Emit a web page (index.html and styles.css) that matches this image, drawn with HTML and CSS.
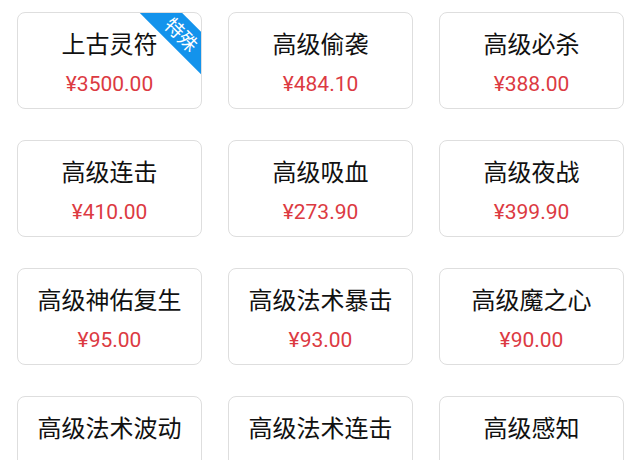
FILE: index.html
```html
<!DOCTYPE html>
<html lang="zh-CN">
<head>
<meta charset="utf-8">
<link rel="stylesheet" href="styles.css">
</head>
<body>
<div class="grid">
  <div class="card"><div class="name">上古灵符</div><div class="price">¥3500.00</div><div class="badge">特殊</div></div>
  <div class="card"><div class="name">高级偷袭</div><div class="price">¥484.10</div></div>
  <div class="card"><div class="name">高级必杀</div><div class="price">¥388.00</div></div>
  <div class="card"><div class="name">高级连击</div><div class="price">¥410.00</div></div>
  <div class="card"><div class="name">高级吸血</div><div class="price">¥273.90</div></div>
  <div class="card"><div class="name">高级夜战</div><div class="price">¥399.90</div></div>
  <div class="card"><div class="name">高级神佑复生</div><div class="price">¥95.00</div></div>
  <div class="card"><div class="name">高级法术暴击</div><div class="price">¥93.00</div></div>
  <div class="card"><div class="name">高级魔之心</div><div class="price">¥90.00</div></div>
  <div class="card"><div class="name">高级法术波动</div><div class="price">¥90.00</div></div>
  <div class="card"><div class="name">高级法术连击</div><div class="price">¥90.00</div></div>
  <div class="card"><div class="name">高级感知</div><div class="price">¥140.00</div></div>
</div>
</body>
</html>
```
FILE: styles.css
```css
html, body {
  margin: 0;
  padding: 0;
  background: #ffffff;
  overflow: hidden;
  height: 460px;
}
body {
  font-family: "Noto Sans CJK SC", "Noto Sans", sans-serif;
}
.grid {
  display: grid;
  grid-template-columns: 185px 185px 185px;
  column-gap: 26px;
  row-gap: 31px;
  padding: 12px 0 0 17px;
}
.card {
  position: relative;
  height: 95px;
  border: 1px solid #dedede;
  border-radius: 8px;
  overflow: hidden;
  display: flex;
  flex-direction: column;
  align-items: center;
  box-sizing: content-box;
}
.name {
  margin-top: 15px;
  font-size: 24px;
  line-height: 30px;
  color: #111111;
  white-space: nowrap;
}
.price {
  margin-top: 12px;
  font-family: Roboto, "Noto Sans", sans-serif;
  font-size: 21px;
  line-height: 28px;
  color: #dc3a42;
}
.badge {
  position: absolute;
  top: 6px;
  left: 112px;
  width: 104px;
  height: 30px;
  line-height: 30px;
  background: #1393ec;
  color: #ffffff;
  font-size: 19px;
  text-align: center;
  transform: rotate(45deg);
}
```
